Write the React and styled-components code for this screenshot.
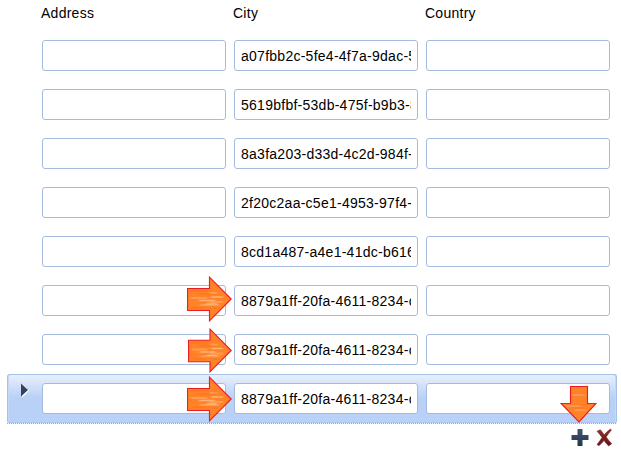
import React from "react";
import styled, { createGlobalStyle, css } from "styled-components";

const GlobalStyle = createGlobalStyle`
  * { box-sizing: border-box; }
  body {
    margin: 0;
    background: #fff;
    color: #000;
    font: 14px/16px "Liberation Sans", Arial, sans-serif;
    letter-spacing: 0.26px;
    overflow: hidden;
  }
`;

const Page = styled.main`
  position: relative;
  width: 621px;
  height: 454px;
  padding-left: 7px;
`;

const HeaderRow = styled.header`
  display: grid;
  grid-template-columns: repeat(3, 184px);
  column-gap: 8px;
  height: 31px;
  padding: 5px 0 0 34px;
`;

const HeaderCell = styled.span`
  line-height: 16px;
`;

const Row = styled.div`
  display: grid;
  grid-template-columns: 26px repeat(3, 184px);
  column-gap: 8px;
  align-items: start;
  width: 610px;
  height: 49px;
  padding-top: 8px;
  border: 1px solid transparent;
  ${({ $selected }) =>
    $selected &&
    css`
      border-color: #a3c2ea;
      border-bottom-color: #a9c5f0;
      border-radius: 3px 3px 2px 2px;
      background: linear-gradient(#e8effc 0, #b9d1f7 48%, #b9d1f7 100%);
      box-shadow: inset 1px 0 #c4d9f8, inset -1px 0 #c4d9f8;
    `}
`;

const Field = styled.input`
  width: 184px;
  height: 31px;
  margin: 0;
  padding: 1px 6px 0;
  border: 1px solid #a5bbdd;
  border-radius: 3px;
  outline: none;
  background: #fff;
  color: #000;
  font: inherit;
  letter-spacing: inherit;
`;

const Marker = styled.svg`
  width: 9px;
  height: 15px;
  margin: 0 0 0 13px;
`;

const Divider = styled.div`
  width: 610px;
  height: 1px;
  background: repeating-linear-gradient(90deg, #8baedc 0 1px, #f1f6fd 1px 2px);
`;

const Toolbar = styled.footer`
  display: flex;
  justify-content: flex-end;
  gap: 7px;
  width: 607px;
  padding-top: 4px;
`;

const IconButton = styled.button`
  display: flex;
  width: 18px;
  height: 19px;
  padding: 0;
  border: 0;
  background: none;
`;

const Callout = styled.svg`
  position: absolute;
  left: ${({ $x }) => $x}px;
  top: ${({ $y }) => $y}px;
  pointer-events: none;
`;

const values = [
  "a07fbb2c-5fe4-4f7a-9dac-5",
  "5619bfbf-53db-475f-b9b3-8",
  "8a3fa203-d33d-4c2d-984f-",
  "2f20c2aa-c5e1-4953-97f4-",
  "8cd1a487-a4e1-41dc-b616",
  "8879a1ff-20fa-4611-8234-c",
  "8879a1ff-20fa-4611-8234-c",
  "8879a1ff-20fa-4611-8234-c",
];

function RightArrow({ x, y, w = 45, h = 46 }) {
  const outline = "M.5 12.5H22.5V1.2L44.2 23L22.5 44.8V34.5H.5Z";
  return (
    <Callout $x={x} $y={y} width={w} height={h} viewBox="0 0 45 46" preserveAspectRatio="none">
      <defs>
        <filter id="soften" x="-10%" y="-20%" width="120%" height="140%">
          <feGaussianBlur stdDeviation="0.9 0.45" />
        </filter>
      </defs>
      <path d={outline} fill="#ff8228" />
      <g fill="none" filter="url(#soften)">
        <path d="M3 15H20M10 18H29M4 31.5H18M25 32H31" stroke="#ff7319" strokeWidth="1.6" opacity=".7" />
        <path d="M4 22H20M22 26H36M13 29H32M23 17H30" stroke="#ffa35c" strokeWidth="2" opacity=".8" />
        <path d="M12 24.5H28M24 21H36M19 28H30" stroke="#ffbf8b" strokeWidth="1.4" opacity=".8" />
      </g>
      <path d={outline} fill="none" stroke="#ed1c24" strokeWidth="1.15" />
    </Callout>
  );
}

function DownArrow() {
  const outline = "M10.5.5H27.5V17.5H36L19 35.8L1 17.5H10.5Z";
  return (
    <Callout $x={560} $y={386} width="37" height="37" viewBox="0 0 37 37">
      <path d={outline} fill="#ff8228" />
      <g fill="none" filter="url(#soften)">
        <path d="M13 9H25M7 20H20M15 24H26" stroke="#ffa967" strokeWidth="1.6" opacity=".75" />
        <path d="M17 18.5H30M12 22H24" stroke="#ff7319" opacity=".7" />
      </g>
      <path d={outline} fill="none" stroke="#ed1c24" strokeWidth="1.15" />
    </Callout>
  );
}

export default function App() {
  return (
    <>
      <GlobalStyle />
      <Page>
        <HeaderRow>
          <HeaderCell>Address</HeaderCell>
          <HeaderCell>City</HeaderCell>
          <HeaderCell>Country</HeaderCell>
        </HeaderRow>
        {values.map((value, i) => {
          const selected = i === values.length - 1;
          return (
            <Row key={i} $selected={selected}>
              <span>
                {selected && (
                  <Marker viewBox="0 0 9 15">
                    <path d="M1 1L8 7.7L1 14.8Z" fill="#fff" />
                    <path d="M0 .5L7 7L0 13.5Z" fill="#30445e" />
                  </Marker>
                )}
              </span>
              <Field aria-label="Address" />
              <Field aria-label="City" defaultValue={value} />
              <Field aria-label="Country" />
            </Row>
          );
        })}
        <Divider />
        <Toolbar>
          <IconButton aria-label="Add row">
            <svg width="18" height="19" viewBox="0 0 18 19">
              <defs>
                <linearGradient id="plus" x2="0" y2="1">
                  <stop stopColor="#43566f" />
                  <stop offset="1" stopColor="#223750" />
                </linearGradient>
              </defs>
              <path d="M6.5 1H11.5V7H17.5V12H11.5V18H6.5V12H.5V7H6.5Z" fill="url(#plus)" />
            </svg>
          </IconButton>
          <IconButton aria-label="Delete row">
            <svg width="18" height="19" viewBox="0 0 18 19">
              <defs>
                <linearGradient id="cross" x2="0" y2="1">
                  <stop stopColor="#8e302d" />
                  <stop offset="1" stopColor="#651515" />
                </linearGradient>
              </defs>
              <path
                d="M1 3.2L4.3 1.7Q6.4 4 8.2 6.8Q10.8 3.5 14.4 1L15.5 2Q12.6 5.2 10.2 9Q12.6 12.6 15.8 15.7L12.6 18Q9.9 15.3 8 12.4Q5.8 15.3 2.8 17.8L1 16.5Q3.8 13.2 6 9.6Q3.7 6 1 3.2Z"
                fill="url(#cross)"
                stroke="#7c2422"
                strokeWidth=".5"
              />
            </svg>
          </IconButton>
        </Toolbar>
        <RightArrow x={187} y={276} />
        <RightArrow x={188} y={328} w={44} h={45} />
        <RightArrow x={187} y={376} />
        <DownArrow />
      </Page>
    </>
  );
}
